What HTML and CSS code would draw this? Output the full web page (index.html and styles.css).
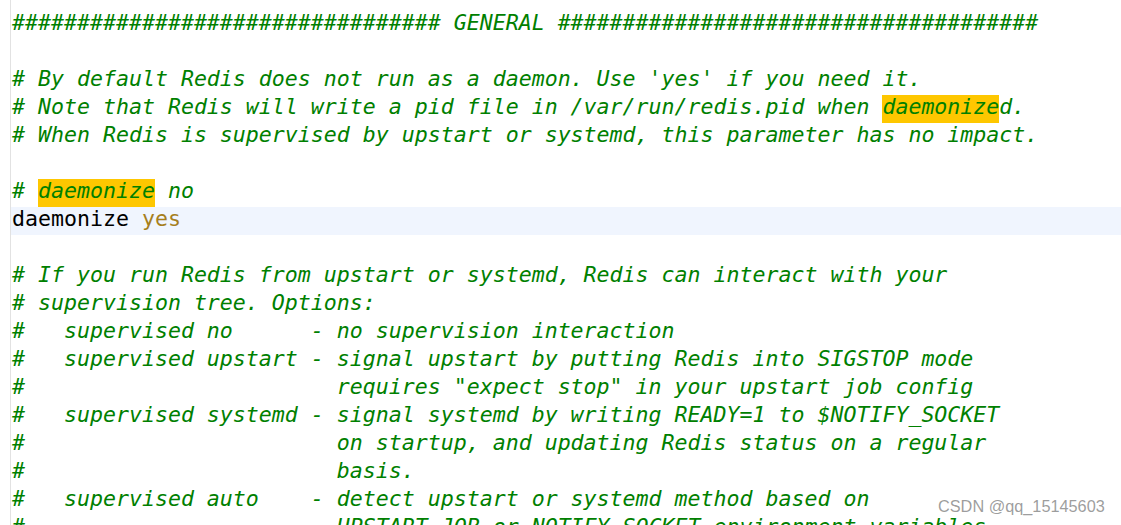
FILE: index.html
```html
<!DOCTYPE html>
<html>
<head>
<meta charset="utf-8">
<link rel="stylesheet" href="styles.css">
</head>
<body>
<div class="editor">
  <div class="code">
    <div class="line c">################################# GENERAL #####################################</div>
    <div class="line"></div>
    <div class="line c"># By default Redis does not run as a daemon. Use 'yes' if you need it.</div>
    <div class="line c"># Note that Redis will write a pid file in /var/run/redis.pid when <span class="hl">daemonize</span>d.</div>
    <div class="line c"># When Redis is supervised by upstart or systemd, this parameter has no impact.</div>
    <div class="line"></div>
    <div class="line c"># <span class="hl">daemonize</span> no</div>
    <div class="line current"><span class="key">daemonize</span> <span class="val">yes</span></div>
    <div class="line"></div>
    <div class="line c"># If you run Redis from upstart or systemd, Redis can interact with your</div>
    <div class="line c"># supervision tree. Options:</div>
    <div class="line c">#   supervised no      - no supervision interaction</div>
    <div class="line c">#   supervised upstart - signal upstart by putting Redis into SIGSTOP mode</div>
    <div class="line c">#                        requires "expect stop" in your upstart job config</div>
    <div class="line c">#   supervised systemd - signal systemd by writing READY=1 to $NOTIFY_SOCKET</div>
    <div class="line c">#                        on startup, and updating Redis status on a regular</div>
    <div class="line c">#                        basis.</div>
    <div class="line c">#   supervised auto    - detect upstart or systemd method based on</div>
    <div class="line c">#                        UPSTART_JOB or NOTIFY_SOCKET environment variables</div>
  </div>
  <div class="watermark">CSDN @qq_15145603</div>
</div>
</body>
</html>
```

FILE: styles.css
```css
html, body {
  margin: 0;
  padding: 0;
  background: #ffffff;
  overflow: hidden;
}

.editor {
  position: relative;
  width: 1121px;
  height: 525px;
  overflow: hidden;
}

.code {
  margin-left: 10px;
  border-left: 1px solid #e2e2e2;
  padding-top: 11px;
  height: 100%;
  box-sizing: border-box;
  font-family: "DejaVu Sans Mono", monospace;
  font-size: 21.59px;
}

.line {
  box-sizing: border-box;
  height: 28px;
  line-height: 24px;
  padding-bottom: 4px;
  padding-left: 1px;
  white-space: pre;
  color: #000000;
}

.line.c {
  color: #008000;
  font-style: italic;
}

.line.current {
  background: #f0f5fe;
}

.key {
  color: #000000;
}

.val {
  color: #a67f1d;
}

.hl {
  display: inline-block;
  background: #fec700;
  padding-bottom: 4px;
  line-height: 24px;
}

.watermark {
  position: absolute;
  left: 938px;
  top: 497px;
  font-family: "Liberation Sans", Arial, sans-serif;
  font-size: 16.3px;
  color: rgba(140, 140, 140, 0.85);
  white-space: nowrap;
}
```
